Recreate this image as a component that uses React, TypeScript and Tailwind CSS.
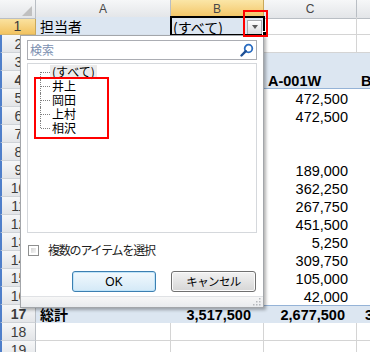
import React from 'react';

const GRID = 'border-r border-b border-[#d4d4d4]';
const BLUE = 'bg-[#dce6f1]';
const COLS = 'grid grid-cols-[36px_135px_93px_93px_13px]';

function Cell({ className = '', children }: { className?: string; children?: React.ReactNode }) {
  return (
    <div className={`h-[18px] overflow-hidden whitespace-nowrap leading-[16px] pt-[2px] ${className}`}>
      {children}
    </div>
  );
}

function RowHead({ n }: { n: number }) {
  return (
    <div
      className={`h-[18px] bg-linear-to-b from-[#f6f7f8] to-[#e3e5e8] border-r border-b border-r-[#b9bec4] border-b-[#cfd3d8] border-l-2 border-l-[#4f7fca] text-[14px] leading-[18px] text-center text-[#3c3c3c] overflow-hidden`}
    >
      {n}
    </div>
  );
}

// values in column C (rows 5-16)
const bodyValues: Record<number, string> = {
  5: '472,500',
  6: '472,500',
  9: '189,000',
  10: '362,250',
  11: '267,750',
  12: '451,500',
  13: '5,250',
  14: '309,750',
  15: '105,000',
  16: '42,000',
};

const members = ['井上', '岡田', '上村', '相沢'];

export default function App() {
  const bodyRows = [5, 6, 7, 8, 9, 10, 11, 12, 13, 14, 15, 16];

  return (
    <div className="relative w-[370px] h-[352px] overflow-hidden bg-white text-black font-['Liberation_Sans','Noto_Sans_CJK_JP',sans-serif]">
      {/* Column headers */}
      <div className={`${COLS} h-[17px] text-[12px] text-[#474747]`}>
        <div className="relative bg-linear-to-b from-[#f6f7f8] to-[#e3e5e8] border-r border-b border-[#b9bec4]">
          <div className="absolute right-[3px] bottom-[2px] w-0 h-0 border-l-[10px] border-l-transparent border-b-[10px] border-b-[#c0c0c0]" />
        </div>
        <div className="flex items-center justify-center bg-linear-to-b from-[#f6f7f8] to-[#e3e5e8] border-r border-b border-[#b9bec4]">A</div>
        <div className="flex items-center justify-center bg-linear-to-b from-[#fbe6a7] to-[#f2c35f] border-r border-b border-r-[#c9a85a] border-b-[#b49146]">B</div>
        <div className="flex items-center justify-center bg-linear-to-b from-[#f6f7f8] to-[#e3e5e8] border-r border-b border-[#b9bec4]">C</div>
        <div className="bg-linear-to-b from-[#f6f7f8] to-[#e3e5e8] border-b border-[#b9bec4]" />
      </div>

      {/* Row 1 */}
      <div className={`${COLS} text-[14px]`}>
        <div className="h-[18px] bg-linear-to-b from-[#fbe6a7] to-[#f2c35f] border-r border-b border-r-[#c9a85a] border-b-[#d6b56c] text-[14px] leading-[18px] text-center text-[#3c3c3c]">
          1
        </div>
        <Cell className={`${BLUE} pl-[4px]`}>担当者</Cell>
        <div className={`relative h-[18px] ${BLUE} pl-[2px] leading-[16px] pt-[2px] whitespace-nowrap font-['Noto_Sans_CJK_JP',sans-serif] text-[14px]`}>
          (すべて)
          <div className="absolute right-[2px] bottom-0 w-[15px] h-[15px] bg-linear-to-b from-[#ffffff] to-[#d9dadc] border border-[#a9abae] flex items-center justify-center">
            <div className="w-0 h-0 border-l-[3px] border-r-[3px] border-t-[4px] border-l-transparent border-r-transparent border-t-[#5a5a5a] -mt-[2px]" />
          </div>
          <div className="absolute -left-[1px] -top-[1px] -right-[1px] -bottom-[1px] border-2 border-black pointer-events-none" />
          <div className="absolute left-[91px] top-[14px] w-[5px] h-[5px] bg-black border border-white" />
        </div>
        <Cell className={GRID} />
        <Cell className="border-b border-[#d4d4d4]" />
      </div>

      {/* Row 2 */}
      <div className={COLS}>
        <RowHead n={2} />
        <Cell className={GRID} />
        <Cell className={GRID} />
        <Cell className={GRID} />
        <Cell className="border-b border-[#d4d4d4]" />
      </div>

      {/* Row 3 */}
      <div className={COLS}>
        <RowHead n={3} />
        <Cell className={BLUE} />
        <Cell className={BLUE} />
        <Cell className={BLUE} />
        <Cell className={BLUE} />
      </div>

      {/* Row 4 */}
      <div className={`${COLS} text-[14.5px] font-bold`}>
        <RowHead n={4} />
        <Cell className={`${BLUE} border-b border-[#95b3d7]`} />
        <Cell className={`${BLUE} border-b border-[#95b3d7]`} />
        <Cell className={`${BLUE} border-b border-[#95b3d7] pl-[4px]`}>A-001W</Cell>
        <Cell className={`${BLUE} border-b border-[#95b3d7] pl-[4px]`}>B</Cell>
      </div>

      {/* Rows 5-16 */}
      {bodyRows.map((r) => (
        <div key={r} className={`${COLS} text-[14.5px]`}>
          <RowHead n={r} />
          <Cell />
          <Cell />
          <Cell className="text-right pr-[9px]">{bodyValues[r] ?? ''}</Cell>
          <Cell />
        </div>
      ))}

      {/* Row 17 grand total */}
      <div className={`${COLS} text-[14.5px] font-bold`}>
        <RowHead n={17} />
        <Cell className={`${BLUE} border-t border-[#95b3d7] !pt-[1px] pl-[4px] text-[14px]`}>総計</Cell>
        <Cell className={`${BLUE} border-t border-[#95b3d7] !pt-[1px] text-right pr-[13px]`}>3,517,500</Cell>
        <Cell className={`${BLUE} border-t border-[#95b3d7] !pt-[1px] text-right pr-[12px]`}>2,677,500</Cell>
        <Cell className={`${BLUE} border-t border-[#95b3d7] !pt-[1px] pl-[8px]`}>3</Cell>
      </div>

      {/* Rows 18-19 */}
      {[18, 19].map((r) => (
        <div key={r} className={COLS}>
          <RowHead n={r} />
          <Cell className={GRID} />
          <Cell className={GRID} />
          <Cell className={GRID} />
          <Cell className="border-b border-[#d4d4d4]" />
        </div>
      ))}

      {/* Filter dropdown panel */}
      <div className="absolute left-[20px] top-[35px] w-[244px] h-[273px] bg-white border border-[#a3a6aa] shadow-[2px_2px_3px_rgba(0,0,0,0.3)] flex flex-col font-['Noto_Sans_CJK_JP',sans-serif]">
        {/* Search box */}
        <div className="mx-[6px] mt-[4px] h-[20px] border border-[#abadb3] flex items-center justify-between pl-[2px] pr-[2px]">
          <span className="text-[12px] leading-none text-[#7b8fb0]">検索</span>
          <svg width="14" height="14" viewBox="0 0 14 14">
            <circle cx="8.5" cy="5.5" r="3.8" fill="#ffffff" stroke="#2a6cc0" strokeWidth="1.8" />
            <line x1="5.8" y1="8.2" x2="1.5" y2="12.5" stroke="#1d4f96" strokeWidth="2.4" strokeLinecap="round" />
          </svg>
        </div>

        {/* Tree list */}
        <div className="mx-[6px] mt-[3px] h-[170px] border border-[#d5d8dc] pt-[1px] text-[12px]">
          {['(すべて)', ...members].map((m, i) => (
            <div key={m} className="relative h-[14px] flex items-center pl-[22px] leading-[12px]">
              {i === 0 && <span className="absolute left-[12px] top-[7px] bottom-0 border-l border-dotted border-[#808080]" />}
              {i > 0 && i < members.length && <span className="absolute left-[12px] top-0 bottom-0 border-l border-dotted border-[#808080]" />}
              {i === members.length && <span className="absolute left-[12px] top-0 h-[7px] border-l border-dotted border-[#808080]" />}
              <span className="absolute left-[13px] top-[7px] w-[9px] border-t border-dotted border-[#808080]" />
              <span className={i === 0 ? 'px-[2px] py-[1px] bg-[#ebebeb]' : 'px-[2px]'}>{m}</span>
            </div>
          ))}
        </div>

        {/* Multi select checkbox */}
        <div className="mt-[9px] ml-[7px] h-[16px] flex items-center gap-[9px]">
          <div className="w-[11px] h-[11px] border border-[#8e8f8f] bg-white p-[2px]">
            <div className="w-full h-full bg-linear-to-br from-[#d4d4d4] to-[#f7f7f7]" />
          </div>
          <span className="text-[12px] leading-none tracking-[-1.2px] text-[#1e1e1e]">複数のアイテムを選択</span>
        </div>

        {/* Buttons */}
        <div className="mt-[13px] flex justify-end gap-[15px] pr-[7px]">
          <button className="w-[84px] h-[21px] rounded-[3px] border border-[#3c7fb1] bg-linear-to-b from-[#f2f9fd] to-[#d4e9f7] shadow-[inset_0_0_0_1px_#bfe4f9] text-[12px] leading-none font-['Liberation_Sans',sans-serif] text-black">
            OK
          </button>
          <button className="w-[85px] h-[21px] rounded-[3px] border border-[#707070] bg-linear-to-b from-[#f2f2f2] to-[#d6d6d6] shadow-[inset_0_0_0_1px_#fbfbfb] text-[11.5px] leading-none tracking-[-0.6px] text-black">
            キャンセル
          </button>
        </div>

        {/* Resize gripper */}
        <div className="relative mt-auto h-[11px] bg-linear-to-b from-[#f7f7f7] to-[#e9ebee] border-t border-[#e0e2e5]">
          <svg className="absolute right-[2px] bottom-[1px]" width="8" height="8" viewBox="0 0 8 8">
            <rect x="6" y="0" width="1.5" height="1.5" fill="#b5b8bc" />
            <rect x="3" y="3" width="1.5" height="1.5" fill="#b5b8bc" />
            <rect x="6" y="3" width="1.5" height="1.5" fill="#b5b8bc" />
            <rect x="0" y="6" width="1.5" height="1.5" fill="#b5b8bc" />
            <rect x="3" y="6" width="1.5" height="1.5" fill="#b5b8bc" />
            <rect x="6" y="6" width="1.5" height="1.5" fill="#b5b8bc" />
          </svg>
        </div>
      </div>

      {/* Red annotation boxes */}
      <div className="absolute left-[34px] top-[77px] w-[75px] h-[62px] border-2 border-[#ff0000] pointer-events-none" />
      <div className="absolute left-[243px] top-[10px] w-[25px] h-[27px] border-2 border-[#ff0000] pointer-events-none" />
    </div>
  );
}
